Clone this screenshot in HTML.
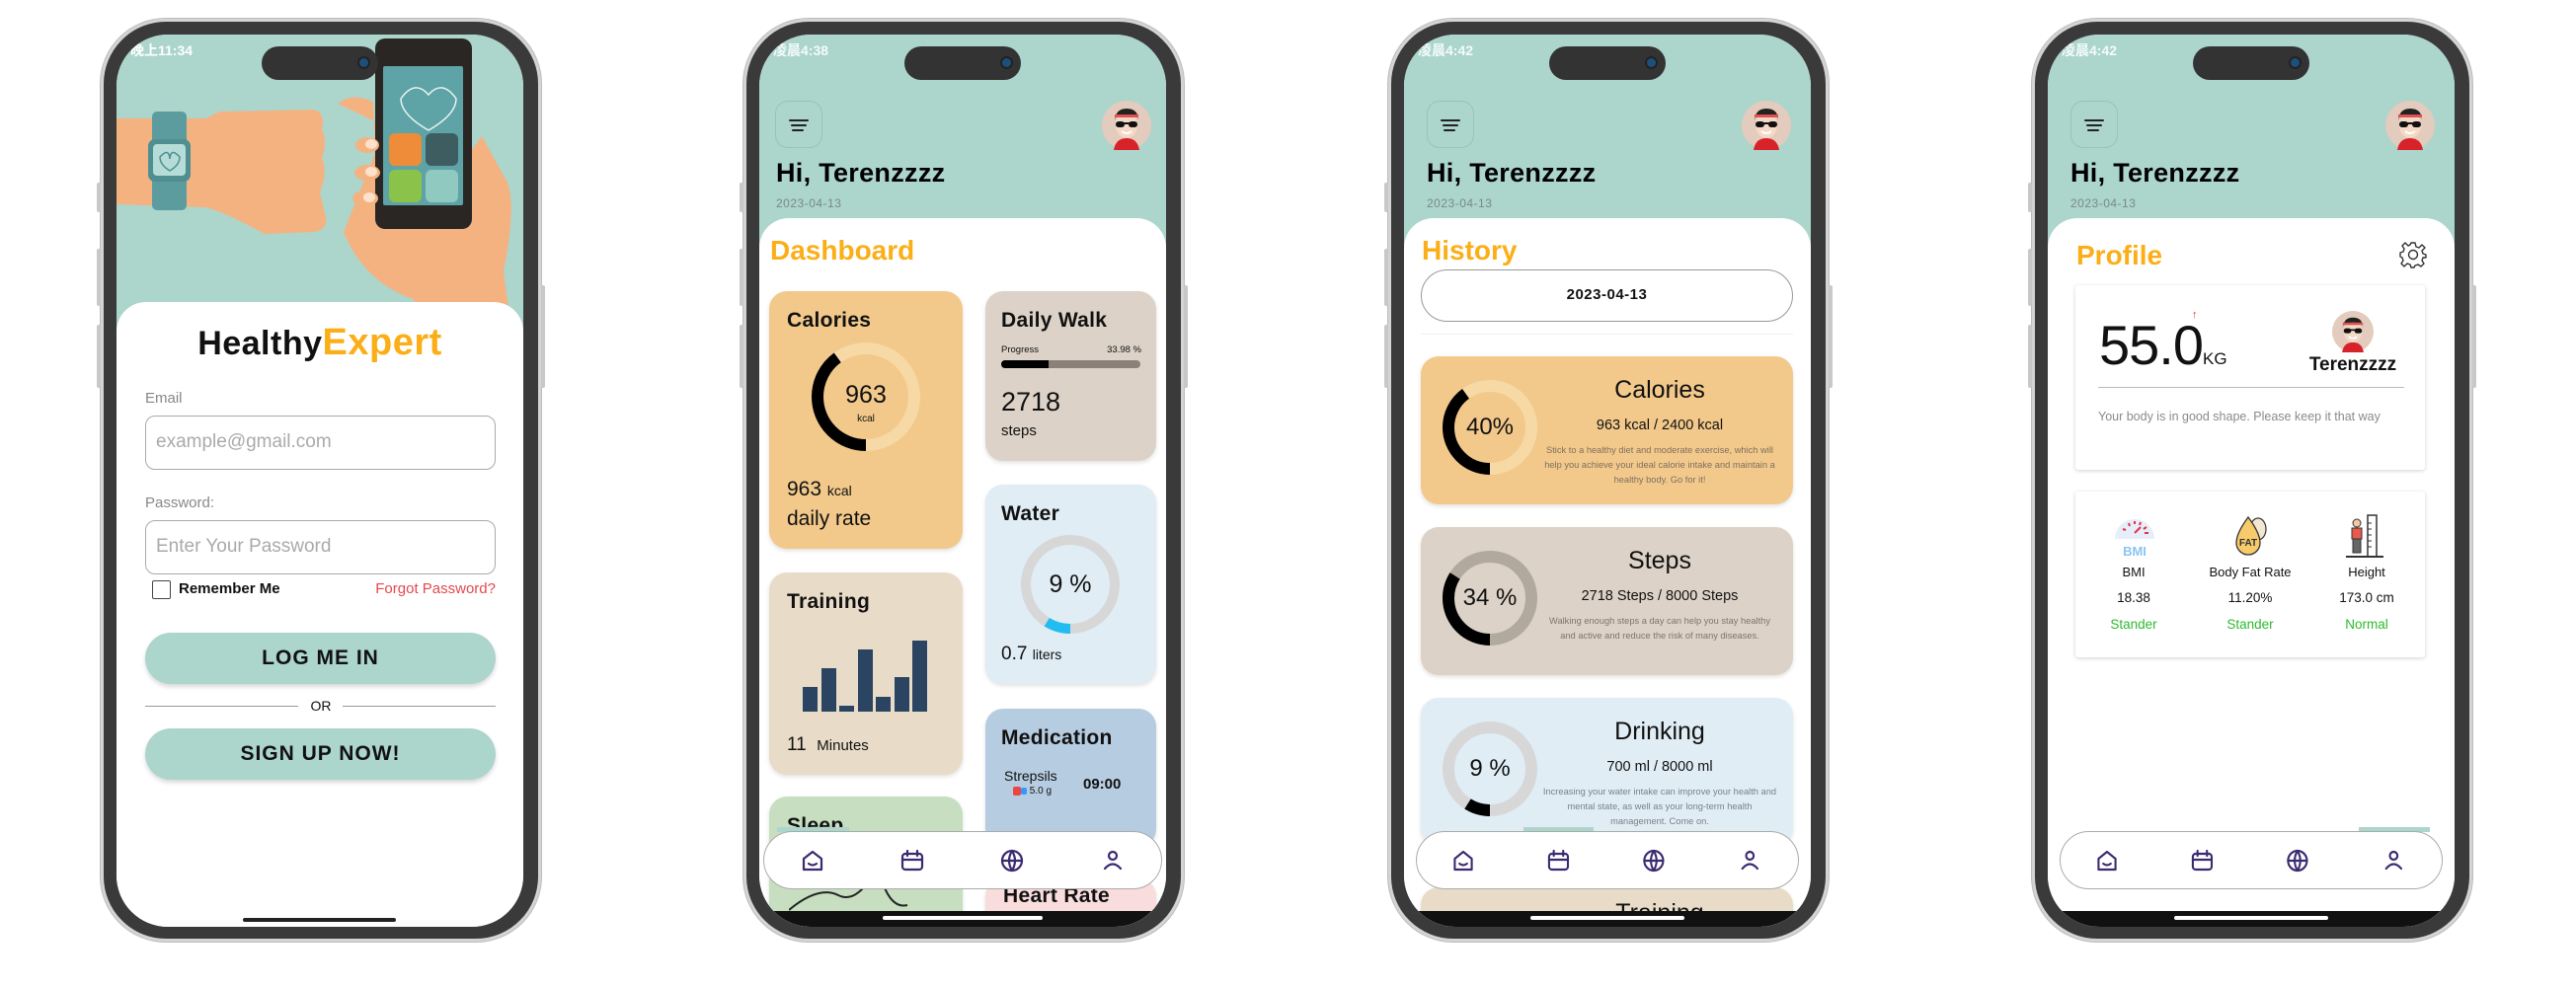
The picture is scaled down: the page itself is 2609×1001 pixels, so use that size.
<!DOCTYPE html>
<html><head><meta charset="utf-8">
<style>
*{margin:0;padding:0;box-sizing:border-box}
body{width:2609px;height:1001px;background:#fff;position:relative;overflow:hidden;font-family:"Liberation Sans","Noto Sans CJK SC",sans-serif;color:#111}
.ph{position:absolute;top:19px;width:446px;height:935px;border-radius:66px;background:#3a3a3a;border:3px solid #d4d4d4;box-shadow:0 0 0 1px #bdbdbd}
.btn{position:absolute;background:#c8c8c8;width:4px;border-radius:2px}
.scr{position:absolute;left:13px;top:13px;width:412px;height:904px;border-radius:52px;overflow:hidden;background:#fff}
.ab{position:absolute}
.island{position:absolute;left:147px;top:12px;width:118px;height:34px;border-radius:17px;background:#333}
.island:after{content:"";position:absolute;right:10px;top:12px;width:9px;height:9px;border-radius:50%;background:#1e4f7a;box-shadow:0 0 0 2px #222}
.sb{position:absolute;left:14px;top:6px;font-size:14px;font-weight:bold;color:#fff}
.teal{background:#acd5cc}
.menu{position:absolute;left:16px;top:67px;width:48px;height:48px;border-radius:13px;border:1.5px solid rgba(0,0,0,.09)}
.menu i{position:absolute;height:2px;background:#222;border-radius:1px}
.hi{position:absolute;left:17px;top:125px;font-size:27px;font-weight:bold;color:#000;letter-spacing:.3px}
.date{position:absolute;left:17px;top:164px;font-size:12px;color:#7a8a86;letter-spacing:.5px}
.white{position:absolute;left:0;top:186px;width:412px;height:760px;background:#fff;border-radius:30px 30px 0 0}
.title{position:absolute;font-size:28px;color:#fbae17;font-weight:bold}
.card{position:absolute;border-radius:18px;box-shadow:0 2px 4px rgba(0,0,0,.12)}
.ct{position:absolute;left:18px;top:18px;font-size:21px;font-weight:bold;letter-spacing:.3px}
.nav{position:absolute;height:59px;background:#fff;border:1.5px solid #aaa;border-radius:30px}
.bot{position:absolute;left:0;top:888px;width:412px;height:16px;background:#111}
.hbar{position:absolute;height:4px;border-radius:2px}
.cen{text-align:center}
.bar{position:absolute;width:15px;background:#2b4462}
</style></head><body>

<!-- ============ PHONE 1 ============ -->
<div class="ph" style="left:102px">
 <div class="scr">
  <div class="ab teal" style="left:0;top:0;width:412px;height:300px"></div>
  <svg class="ab" style="left:0;top:0" width="412" height="300" viewBox="0 0 412 300">
   <path d="M0 85 L90 85 L105 78 L200 76 Q212 80 208 95 Q214 110 208 125 Q214 140 206 160 L212 185 Q214 198 200 200 L150 202 Q110 180 90 175 L0 172Z" fill="#f5b281"/>
   <rect x="36" y="78" width="35" height="100" rx="5" fill="#5c9c9f"/>
   <rect x="32" y="106" width="43" height="43" rx="7" fill="#4f8f92"/>
   <rect x="37" y="111" width="33" height="32" rx="4" fill="#b6dcd8"/>
   <path d="M44 124 q9 -10 10 2 q1 -12 10 -2 q0 8 -10 14 q-10 -6 -10 -14z" fill="none" stroke="#4f8f92" stroke-width="1.5"/>
   <path d="M224 70 Q238 58 260 68 L262 120 L230 200 Q250 250 300 268 L330 300 L400 300 L392 240 Q405 175 396 150 L370 103 L350 130 Z" fill="#f5b281"/>
   <rect x="262" y="4" width="98" height="193" rx="10" fill="#2a2624"/>
   <rect x="270" y="32" width="81" height="141" rx="2" fill="#5ea3a6"/>
   <path d="M288 65 q14 -20 28 -4 q14 -16 28 4 q0 16 -28 32 q-28 -16 -28 -32z" fill="none" stroke="#e7f3f2" stroke-width="1.5"/>
   <rect x="276" y="100" width="33" height="33" rx="6" fill="#ee8c3a"/>
   <rect x="313" y="100" width="33" height="33" rx="6" fill="#3d5d61"/>
   <rect x="276" y="137" width="33" height="33" rx="6" fill="#8bc34a"/>
   <rect x="313" y="137" width="33" height="33" rx="6" fill="#8fc9c0"/>
   <ellipse cx="254" cy="112" rx="12" ry="8" fill="#f5b281"/><ellipse cx="254" cy="140" rx="13" ry="8" fill="#f5b281"/><ellipse cx="252" cy="166" rx="13" ry="8" fill="#f5b281"/>
   <ellipse cx="258" cy="111" rx="6" ry="5" fill="#fde1cc"/><ellipse cx="258" cy="139" rx="6" ry="5" fill="#fde1cc"/><ellipse cx="256" cy="165" rx="6" ry="5" fill="#fde1cc"/>
  </svg>
  <div class="island"></div>
  <div class="sb">晚上11:34</div>
  <div class="ab" style="left:0;top:271px;width:412px;height:640px;background:#fff;border-radius:30px 30px 0 0"></div>
  <div class="ab cen" style="left:0;top:291px;width:412px;font-size:38px;font-weight:bold;letter-spacing:.5px"><span style="font-size:34px">Healthy</span><span style="color:#fbae17">Expert</span></div>
  <div class="ab" style="left:29px;top:360px;font-size:15px;color:#888">Email</div>
  <div class="ab" style="left:29px;top:386px;width:355px;height:55px;border:1.5px solid #aaa;border-radius:10px;font-size:19px;color:#aaa;padding:15px 0 0 10px">example@gmail.com</div>
  <div class="ab" style="left:29px;top:466px;font-size:15px;color:#888">Password:</div>
  <div class="ab" style="left:29px;top:492px;width:355px;height:55px;border:1.5px solid #aaa;border-radius:10px;font-size:19px;color:#aaa;padding:15px 0 0 10px">Enter Your Password</div>
  <div class="ab" style="left:36px;top:553px;width:19px;height:19px;border:1.5px solid #444;border-radius:2px"></div>
  <div class="ab" style="left:63px;top:553px;font-size:15px;font-weight:bold">Remember Me</div>
  <div class="ab" style="right:28px;top:553px;font-size:15px;color:#e5484f">Forgot Password?</div>
  <div class="ab cen" style="left:29px;top:606px;width:355px;height:52px;border-radius:26px;background:#acd5cc;box-shadow:0 3px 4px rgba(0,0,0,.15);font-size:21px;font-weight:bold;line-height:52px;letter-spacing:1px">LOG ME IN</div>
  <div class="ab" style="left:29px;top:680px;width:155px;height:1px;background:#999"></div>
  <div class="ab" style="left:229px;top:680px;width:155px;height:1px;background:#999"></div>
  <div class="ab cen" style="left:185px;top:672px;width:44px;font-size:14px">OR</div>
  <div class="ab cen" style="left:29px;top:703px;width:355px;height:52px;border-radius:26px;background:#acd5cc;box-shadow:0 3px 4px rgba(0,0,0,.15);font-size:21px;font-weight:bold;line-height:52px;letter-spacing:1px">SIGN UP NOW!</div>
  <div class="hbar" style="left:128px;top:895px;width:155px;background:#222"></div>
 </div>
</div>

<svg width="0" height="0" style="position:absolute"><defs>
 <g id="av">
  <circle cx="25" cy="25" r="25" fill="#e3cbbd"/>
  <path d="M12 50 Q14 38 25 38 Q36 38 38 50Z" fill="#d8222a"/>
  <ellipse cx="25" cy="25" rx="11" ry="13" fill="#f4d9c6"/>
  <path d="M13 20 Q14 8 25 8 Q37 8 37 20 L37 16 Q25 12 13 16Z" fill="#222"/>
  <rect x="13" y="14" width="24" height="3" fill="#e05050"/>
  <rect x="14" y="21" width="9" height="6" rx="3" fill="#111"/><rect x="27" y="21" width="9" height="6" rx="3" fill="#111"/><rect x="22" y="22" width="6" height="2" fill="#111"/>
  <path d="M20 31 Q25 35 30 31" stroke="#fff" stroke-width="2" fill="none"/>
 </g>
 <g id="navi" fill="none" stroke="#3b2a72" stroke-width="2.2" stroke-linecap="round" stroke-linejoin="round">
  <path d="M-9 -2 L0 -9 L9 -2 L9 9 L-9 9Z"/><path d="M-4 3 Q0 6 4 3"/>
  <g transform="translate(101,0)"><rect x="-10" y="-7" width="20" height="16" rx="3"/><path d="M-10 -1 H10 M-5 -10 V-5 M5 -10 V-5"/></g>
  <g transform="translate(202,0)"><circle r="10"/><path d="M-10 0 H10 M0 -10 Q-6 0 0 10 Q6 0 0 -10"/></g>
  <g transform="translate(304,0)"><circle cy="-5" r="4"/><path d="M-8 8 Q0 -1 8 8"/></g>
 </g>
</defs></svg>

<!-- ============ PHONE 2 ============ -->
<div class="ph" style="left:753px">
 <div class="scr">
  <div class="ab teal" style="left:0;top:0;width:412px;height:230px"></div>
  <div class="island"></div>
  <div class="sb" style="color:#f4fbf9">凌晨4:38</div>
  <div class="menu"><i style="left:13px;top:18px;width:20px"></i><i style="left:15px;top:23px;width:16px"></i><i style="left:16px;top:28px;width:12px"></i></div>
  <svg class="ab" style="left:347px;top:67px" width="50" height="50"><use href="#av"/></svg>
  <div class="hi">Hi, Terenzzzz</div>
  <div class="date">2023-04-13</div>
  <div class="white"></div>
  <div class="title" style="left:11px;top:203px">Dashboard</div>

  <div class="card" style="left:10px;top:260px;width:196px;height:261px;background:#f2c98b">
   <div class="ct">Calories</div>
   <svg class="ab" style="left:43px;top:52px" width="110" height="110"><circle cx="55" cy="55" r="49" fill="none" stroke="#f6d9a5" stroke-width="12"/><circle cx="55" cy="55" r="49" fill="none" stroke="#000" stroke-width="12" stroke-dasharray="123 400" transform="rotate(90 55 55)"/></svg>
   <div class="ab cen" style="left:43px;top:91px;width:110px;font-size:25px">963</div>
   <div class="ab cen" style="left:43px;top:124px;width:110px;font-size:10px">kcal</div>
   <div class="ab" style="left:18px;top:189px;font-size:21px">963 <span style="font-size:14px">kcal</span></div>
   <div class="ab" style="left:18px;top:219px;font-size:21px">daily rate</div>
  </div>

  <div class="card" style="left:10px;top:545px;width:196px;height:205px;background:#e8dcc8">
   <div class="ct">Training</div>
   <div class="bar" style="left:34px;top:116px;height:25px"></div>
   <div class="bar" style="left:53px;top:97px;height:44px"></div>
   <div class="bar" style="left:71px;top:135px;height:6px"></div>
   <div class="bar" style="left:90px;top:78px;height:63px"></div>
   <div class="bar" style="left:108px;top:126px;height:15px"></div>
   <div class="bar" style="left:127px;top:106px;height:35px"></div>
   <div class="bar" style="left:145px;top:69px;height:72px"></div>
   <div class="ab" style="left:18px;top:164px;font-size:19px">11 &nbsp;<span style="font-size:15px">Minutes</span></div>
  </div>

  <div class="card" style="left:10px;top:772px;width:196px;height:140px;background:#c7dfc0">
   <div class="ct">Sleep</div>
   <svg class="ab" style="left:20px;top:60px" width="160" height="60"><path d="M0 55 Q30 30 50 40 Q70 50 90 10 Q100 55 120 50" fill="none" stroke="#222" stroke-width="2"/></svg>
  </div>
  <div class="card" style="left:229px;top:855px;width:173px;height:60px;background:#f9dcdc">
   <div class="ct" style="top:6px">Heart Rate</div>
  </div>

  <div class="card" style="left:229px;top:260px;width:173px;height:172px;background:#ddd2c7">
   <div class="ct" style="left:16px">Daily Walk</div>
   <div class="ab" style="left:16px;top:54px;font-size:9.5px">Progress</div>
   <div class="ab" style="right:15px;top:54px;font-size:9.5px">33.98 %</div>
   <div class="ab" style="left:16px;top:70px;width:141px;height:8px;border-radius:4px;background:#8c8178;overflow:hidden"><div style="width:48px;height:8px;background:#000"></div></div>
   <div class="ab" style="left:16px;top:97px;font-size:27px">2718</div>
   <div class="ab" style="left:16px;top:133px;font-size:15px">steps</div>
  </div>

  <div class="card" style="left:229px;top:456px;width:173px;height:202px;background:#e0edf5">
   <div class="ct" style="left:16px">Water</div>
   <svg class="ab" style="left:36px;top:51px" width="100" height="100"><circle cx="50" cy="50" r="45" fill="none" stroke="#d7d7d7" stroke-width="10"/><circle cx="50" cy="50" r="45" fill="none" stroke="#21bdf0" stroke-width="10" stroke-dasharray="25 400" transform="rotate(90 50 50)"/></svg>
   <div class="ab cen" style="left:36px;top:87px;width:100px;font-size:25px">9 %</div>
   <div class="ab" style="left:16px;top:161px;font-size:19px">0.7 <span style="font-size:14px">liters</span></div>
  </div>

  <div class="card" style="left:229px;top:683px;width:173px;height:140px;background:#b6cce0">
   <div class="ct" style="left:16px">Medication</div>
   <div class="ab" style="left:19px;top:60px;font-size:14px">Strepsils</div>
   <div class="ab" style="left:28px;top:78px;font-size:10px"><span style="display:inline-block;width:8px;height:9px;background:#e44;border-radius:2px;vertical-align:middle"></span><span style="display:inline-block;width:6px;height:7px;background:#39f;border-radius:2px;vertical-align:middle"></span> 5.0 g</div>
   <div class="ab" style="left:99px;top:68px;font-size:15px;font-weight:bold">09:00</div>
  </div>

  <div class="ab" style="left:18px;top:803px;width:73px;height:5px;background:#acd5cc"></div>
  <div class="nav" style="left:4px;top:807px;width:404px"></div>
  <svg class="ab" style="left:0;top:820px" width="412" height="40"><use href="#navi" x="54" y="17"/></svg>
  <div class="bot"></div>
  <div class="hbar" style="left:125px;top:893px;width:162px;background:#fff"></div>
 </div>
</div>

<!-- ============ PHONE 3 ============ -->
<div class="ph" style="left:1406px">
 <div class="scr">
  <div class="ab teal" style="left:0;top:0;width:412px;height:230px"></div>
  <div class="island"></div>
  <div class="sb" style="color:#f4fbf9">凌晨4:42</div>
  <div class="menu" style="left:23px"><i style="left:13px;top:18px;width:20px"></i><i style="left:15px;top:23px;width:16px"></i><i style="left:16px;top:28px;width:12px"></i></div>
  <svg class="ab" style="left:342px;top:67px" width="50" height="50"><use href="#av"/></svg>
  <div class="hi" style="left:23px">Hi, Terenzzzz</div>
  <div class="date" style="left:23px">2023-04-13</div>
  <div class="white"></div>
  <div class="title" style="left:18px;top:203px">History</div>
  <div class="ab cen" style="left:17px;top:238px;width:377px;height:53px;border:1.5px solid #999;border-radius:27px;font-size:15px;font-weight:bold;line-height:50px;letter-spacing:.5px">2023-04-13</div>
  <div class="ab" style="left:17px;top:303px;width:377px;height:1px;background:#f0f0f0"></div>

  <div class="card" style="left:17px;top:326px;width:377px;height:150px;background:#f2c98b">
   <svg class="ab" style="left:22px;top:24px" width="96" height="96"><circle cx="48" cy="48" r="42" fill="none" stroke="#f6d9a5" stroke-width="12"/><circle cx="48" cy="48" r="42" fill="none" stroke="#000" stroke-width="12" stroke-dasharray="105.6 400" transform="rotate(90 48 48)"/></svg>
   <div class="ab cen" style="left:22px;top:58px;width:96px;font-size:24px">40%</div>
   <div class="ab cen" style="left:142px;top:20px;width:200px;font-size:25px">Calories</div>
   <div class="ab cen" style="left:122px;top:62px;width:240px;font-size:14.5px">963 kcal / 2400 kcal</div>
   <div class="ab cen" style="left:122px;top:88px;width:240px;font-size:9.3px;line-height:15px;color:#7f6f5f">Stick to a healthy diet and moderate exercise, which will help you achieve your ideal calorie intake and maintain a healthy body. Go for it!</div>
  </div>

  <div class="card" style="left:17px;top:499px;width:377px;height:150px;background:#ddd2c7">
   <svg class="ab" style="left:22px;top:24px" width="96" height="96"><circle cx="48" cy="48" r="42" fill="none" stroke="#b1a89e" stroke-width="12"/><circle cx="48" cy="48" r="42" fill="none" stroke="#000" stroke-width="12" stroke-dasharray="89.7 400" transform="rotate(90 48 48)"/></svg>
   <div class="ab cen" style="left:22px;top:58px;width:96px;font-size:24px">34 %</div>
   <div class="ab cen" style="left:142px;top:20px;width:200px;font-size:25px">Steps</div>
   <div class="ab cen" style="left:122px;top:62px;width:240px;font-size:14.5px">2718 Steps / 8000 Steps</div>
   <div class="ab cen" style="left:122px;top:88px;width:240px;font-size:9.3px;line-height:15px;color:#7f7468">Walking enough steps a day can help you stay healthy and active and reduce the risk of many diseases.</div>
  </div>

  <div class="card" style="left:17px;top:672px;width:377px;height:150px;background:#e0edf5">
   <svg class="ab" style="left:22px;top:24px" width="96" height="96"><circle cx="48" cy="48" r="42" fill="none" stroke="#d7d7d7" stroke-width="12"/><circle cx="48" cy="48" r="42" fill="none" stroke="#000" stroke-width="12" stroke-dasharray="23.7 400" transform="rotate(90 48 48)"/></svg>
   <div class="ab cen" style="left:22px;top:58px;width:96px;font-size:24px">9 %</div>
   <div class="ab cen" style="left:142px;top:20px;width:200px;font-size:25px">Drinking</div>
   <div class="ab cen" style="left:122px;top:62px;width:240px;font-size:14.5px">700 ml / 8000 ml</div>
   <div class="ab cen" style="left:122px;top:88px;width:240px;font-size:9.3px;line-height:15px;color:#7a8088">Increasing your water intake can improve your health and mental state, as well as your long-term health management. Come on.</div>
  </div>
  <div class="card" style="left:17px;top:864px;width:377px;height:60px;background:#e8dcc8">
   <div class="ab cen" style="left:142px;top:12px;width:200px;font-size:25px">Training</div>
  </div>

  <div class="ab" style="left:121px;top:803px;width:71px;height:5px;background:#acd5cc"></div>
  <div class="nav" style="left:12px;top:807px;width:388px"></div>
  <svg class="ab" style="left:0;top:820px" width="412" height="40"><use href="#navi" x="60" y="17" transform="translate(60,0) scale(.955 1) translate(-60,0)"/></svg>
  <div class="bot"></div>
  <div class="hbar" style="left:128px;top:893px;width:156px;background:#fff"></div>
 </div>
</div>

<!-- ============ PHONE 4 ============ -->
<div class="ph" style="left:2058px">
 <div class="scr">
  <div class="ab teal" style="left:0;top:0;width:412px;height:230px"></div>
  <div class="island"></div>
  <div class="sb" style="color:#f4fbf9">凌晨4:42</div>
  <div class="menu" style="left:23px"><i style="left:13px;top:18px;width:20px"></i><i style="left:15px;top:23px;width:16px"></i><i style="left:16px;top:28px;width:12px"></i></div>
  <svg class="ab" style="left:342px;top:67px" width="50" height="50"><use href="#av"/></svg>
  <div class="hi" style="left:23px">Hi, Terenzzzz</div>
  <div class="date" style="left:23px">2023-04-13</div>
  <div class="white"></div>
  <div class="title" style="left:29px;top:208px">Profile</div>
  <svg class="ab" style="left:356px;top:209px" width="28" height="28" viewBox="-14 -14 28 28"><path d="M-2 -12 H2 L3 -8 L6 -7 L9 -10 L12 -7 L9 -4 L10 -1 L13 0 V3 L10 3 L9 6 L11 9 L8 12 L5 10 L2 11 L1 13 H-2 L-3 10 L-6 9 L-9 12 L-12 9 L-10 6 L-11 3 L-13 2 V-2 L-10 -3 L-9 -6 L-11 -9 L-8 -12 L-5 -9 L-3 -10Z" fill="none" stroke="#333" stroke-width="1.4" stroke-linejoin="round"/><circle r="4.5" fill="none" stroke="#333" stroke-width="1.4"/></svg>

  <div class="ab" style="left:28px;top:254px;width:354px;height:187px;background:#fff;box-shadow:0 1px 4px rgba(0,0,0,.18);border-radius:3px">
   <div class="ab" style="left:24px;top:28px;font-size:56px;letter-spacing:-1px">55.0<span style="font-size:17px;letter-spacing:0">KG</span></div>
   <div class="ab" style="left:118px;top:24px;color:#e33;font-size:11px">↑</div>
   <svg class="ab" style="left:260px;top:26px" width="42" height="42" viewBox="0 0 50 50"><use href="#av"/></svg>
   <div class="ab cen" style="left:221px;top:70px;width:120px;font-size:19px;font-weight:bold">Terenzzzz</div>
   <div class="ab" style="left:23px;top:103px;width:310px;height:1px;background:#bbb"></div>
   <div class="ab" style="left:23px;top:123px;width:320px;font-size:12.5px;line-height:21px;color:#8a8a8a">Your body is in good shape. Please keep it that way</div>
  </div>

  <div class="ab" style="left:28px;top:463px;width:354px;height:168px;background:#fff;box-shadow:0 1px 4px rgba(0,0,0,.18);border-radius:3px">
   <svg class="ab" style="left:38px;top:22px" width="44" height="46"><path d="M2 26 A20 20 0 0 1 42 26Z" fill="#e6eef9"/><g stroke="#e8304a" stroke-width="2"><path d="M10 16 l3 1 M16 10 l1 3 M22 8 v3 M28 9 l-1 3 M34 14 l-3 2 M22 20 l6 -6 M36 20 h-4"/></g><text x="22" y="43" font-size="13" font-weight="bold" fill="#8cc4f0" text-anchor="middle" font-family="Liberation Sans">BMI</text></svg>
   <svg class="ab" style="left:155px;top:22px" width="44" height="46"><ellipse cx="30" cy="16" rx="8" ry="11" fill="#f2e7d2" stroke="#333" stroke-width="1.2"/><path d="M20 4 Q8 20 8 30 A12 12 0 0 0 32 30 Q32 20 20 4Z" fill="#f7cb6b" stroke="#333" stroke-width="1.3"/><text x="20" y="33" font-size="10" font-weight="bold" fill="#333" text-anchor="middle" font-family="Liberation Sans">FAT</text></svg>
   <svg class="ab" style="left:272px;top:22px" width="44" height="46"><rect x="24" y="2" width="9" height="42" fill="#fff" stroke="#333" stroke-width="1.5"/><path d="M24 10h4 M24 16h4 M24 22h4 M24 28h4 M24 34h4" stroke="#333"/><circle cx="13" cy="10" r="4" fill="#f3c6a5" stroke="#333"/><rect x="8" y="15" width="10" height="11" fill="#e85b4b" stroke="#333"/><rect x="9" y="26" width="8" height="14" fill="#666" stroke="#333"/><path d="M2 44 H40" stroke="#333" stroke-width="2"/></svg>
   <div class="ab cen" style="left:0;top:74px;width:118px;font-size:13px">BMI</div>
   <div class="ab cen" style="left:118px;top:74px;width:118px;font-size:13px">Body Fat Rate</div>
   <div class="ab cen" style="left:236px;top:74px;width:118px;font-size:13px">Height</div>
   <div class="ab cen" style="left:0;top:100px;width:118px;font-size:13.5px">18.38</div>
   <div class="ab cen" style="left:118px;top:100px;width:118px;font-size:13.5px">11.20%</div>
   <div class="ab cen" style="left:236px;top:100px;width:118px;font-size:13.5px">173.0 cm</div>
   <div class="ab cen" style="left:0;top:127px;width:118px;font-size:13.5px;color:#2dba2d">Stander</div>
   <div class="ab cen" style="left:118px;top:127px;width:118px;font-size:13.5px;color:#2dba2d">Stander</div>
   <div class="ab cen" style="left:236px;top:127px;width:118px;font-size:13.5px;color:#2dba2d">Normal</div>
  </div>

  <div class="ab" style="left:315px;top:803px;width:72px;height:5px;background:#acd5cc"></div>
  <div class="nav" style="left:12px;top:807px;width:388px"></div>
  <svg class="ab" style="left:0;top:820px" width="412" height="40"><use href="#navi" x="60" y="17" transform="translate(60,0) scale(.955 1) translate(-60,0)"/></svg>
  <div class="bot"></div>
  <div class="hbar" style="left:128px;top:893px;width:156px;background:#fff"></div>
 </div>
</div>

<div class="btn" style="left:98px;top:185px;height:30px"></div><div class="btn" style="left:98px;top:252px;height:58px"></div><div class="btn" style="left:98px;top:329px;height:64px"></div><div class="btn" style="left:548px;top:289px;height:104px"></div>
<div class="btn" style="left:749px;top:185px;height:30px"></div><div class="btn" style="left:749px;top:252px;height:58px"></div><div class="btn" style="left:749px;top:329px;height:64px"></div><div class="btn" style="left:1199px;top:289px;height:104px"></div>
<div class="btn" style="left:1402px;top:185px;height:30px"></div><div class="btn" style="left:1402px;top:252px;height:58px"></div><div class="btn" style="left:1402px;top:329px;height:64px"></div><div class="btn" style="left:1852px;top:289px;height:104px"></div>
<div class="btn" style="left:2054px;top:185px;height:30px"></div><div class="btn" style="left:2054px;top:252px;height:58px"></div><div class="btn" style="left:2054px;top:329px;height:64px"></div><div class="btn" style="left:2504px;top:289px;height:104px"></div>
</body></html>
